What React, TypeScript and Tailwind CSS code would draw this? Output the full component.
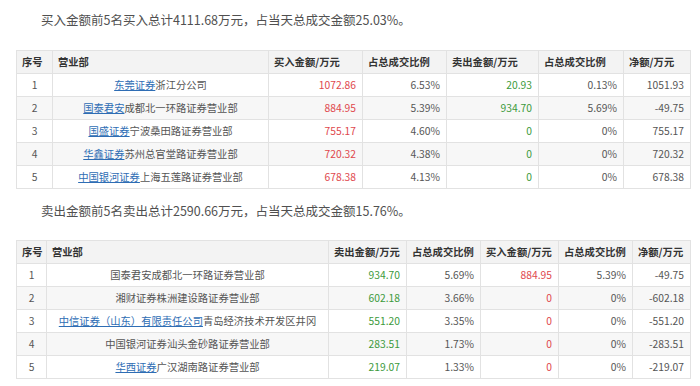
import React from "react";

type Cell = { text: string; color?: string };
type Row = {
  no: number;
  link?: string;
  dept: string;
  a: Cell;
  b: string;
  c: Cell;
  d: string;
  net: string;
};

const RED = "text-[#e0484d]";
const GREEN = "text-[#3c9a3c]";

const buyRows: Row[] = [
  { no: 1, link: "东莞证券", dept: "浙江分公司", a: { text: "1072.86", color: RED }, b: "6.53%", c: { text: "20.93", color: GREEN }, d: "0.13%", net: "1051.93" },
  { no: 2, link: "国泰君安", dept: "成都北一环路证券营业部", a: { text: "884.95", color: RED }, b: "5.39%", c: { text: "934.70", color: GREEN }, d: "5.69%", net: "-49.75" },
  { no: 3, link: "国盛证券", dept: "宁波桑田路证券营业部", a: { text: "755.17", color: RED }, b: "4.60%", c: { text: "0", color: GREEN }, d: "0%", net: "755.17" },
  { no: 4, link: "华鑫证券", dept: "苏州总官堂路证券营业部", a: { text: "720.32", color: RED }, b: "4.38%", c: { text: "0", color: GREEN }, d: "0%", net: "720.32" },
  { no: 5, link: "中国银河证券", dept: "上海五莲路证券营业部", a: { text: "678.38", color: RED }, b: "4.13%", c: { text: "0", color: GREEN }, d: "0%", net: "678.38" },
];

const sellRows: Row[] = [
  { no: 1, dept: "国泰君安成都北一环路证券营业部", a: { text: "934.70", color: GREEN }, b: "5.69%", c: { text: "884.95", color: RED }, d: "5.39%", net: "-49.75" },
  { no: 2, dept: "湘财证券株洲建设路证券营业部", a: { text: "602.18", color: GREEN }, b: "3.66%", c: { text: "0", color: RED }, d: "0%", net: "-602.18" },
  { no: 3, link: "中信证券（山东）有限责任公司", dept: "青岛经济技术开发区井冈", a: { text: "551.20", color: GREEN }, b: "3.35%", c: { text: "0", color: RED }, d: "0%", net: "-551.20" },
  { no: 4, dept: "中国银河证券汕头金砂路证券营业部", a: { text: "283.51", color: GREEN }, b: "1.73%", c: { text: "0", color: RED }, d: "0%", net: "-283.51" },
  { no: 5, link: "华西证券", dept: "广汉湖南路证券营业部", a: { text: "219.07", color: GREEN }, b: "1.33%", c: { text: "0", color: RED }, d: "0%", net: "-219.07" },
];

function DataTable({ heads, widths, rows }: { heads: string[]; widths: string[]; rows: Row[] }) {
  return (
    <table className="table-fixed border-collapse w-[674px] ml-[16px] text-[10.3px] text-[#555]">
      <colgroup>
        {widths.map((w, i) => (
          <col key={i} className={w} />
        ))}
      </colgroup>
      <thead>
        <tr className="h-[23px] bg-[#f3f3f3]">
          {heads.map((h) => (
            <th key={h} className="border border-[#e2e2e2] px-[5px] text-left font-bold text-[#333] whitespace-nowrap">
              {h}
            </th>
          ))}
        </tr>
      </thead>
      <tbody>
        {rows.map((r) => (
          <tr key={r.no} className={`h-[23px] ${r.no % 2 === 0 ? "bg-[#f7f7f7]" : "bg-white"}`}>
            <td className="border border-[#e2e2e2] text-center">{r.no}</td>
            <td className="border border-[#e2e2e2] text-center whitespace-nowrap overflow-hidden">
              {r.link && <span className="text-[#2e6db4] underline">{r.link}</span>}
              {r.dept}
            </td>
            <td className={`border border-[#e2e2e2] text-right px-[6px] ${r.a.color}`}>{r.a.text}</td>
            <td className="border border-[#e2e2e2] text-right px-[6px]">{r.b}</td>
            <td className={`border border-[#e2e2e2] text-right px-[6px] ${r.c.color}`}>{r.c.text}</td>
            <td className="border border-[#e2e2e2] text-right px-[6px]">{r.d}</td>
            <td className="border border-[#e2e2e2] text-right px-[6px]">{r.net}</td>
          </tr>
        ))}
      </tbody>
    </table>
  );
}

export default function App() {
  return (
    <div
      className="w-[700px] h-[386px] bg-white overflow-hidden"
      style={{ fontFamily: '"Noto Sans CJK SC", "Noto Sans", sans-serif' }}
    >
      {/* buy summary */}
      <p className="pt-[11px] pl-[41px] text-[12.5px] leading-[18px] text-[#505050]">
        买入金额前5名买入总计4111.68万元，占当天总成交金额25.03%。
      </p>
      <div className="mt-[21px]">
        <DataTable
          heads={["序号", "营业部", "买入金额/万元", "占总成交比例", "卖出金额/万元", "占总成交比例", "净额/万元"]}
          widths={["w-[36px]", "w-[216px]", "w-[94px]", "w-[84px]", "w-[92px]", "w-[85px]", "w-[67px]"]}
          rows={buyRows}
        />
      </div>

      {/* sell summary */}
      <p className="mt-[13px] pl-[41px] text-[12.5px] leading-[18px] text-[#505050]">
        卖出金额前5名卖出总计2590.66万元，占当天总成交金额15.76%。
      </p>
      <div className="mt-[20px]">
        <DataTable
          heads={["序号", "营业部", "卖出金额/万元", "占总成交比例", "买入金额/万元", "占总成交比例", "净额/万元"]}
          widths={["w-[30px]", "w-[282px]", "w-[78px]", "w-[74px]", "w-[78px]", "w-[74px]", "w-[58px]"]}
          rows={sellRows}
        />
      </div>
    </div>
  );
}
